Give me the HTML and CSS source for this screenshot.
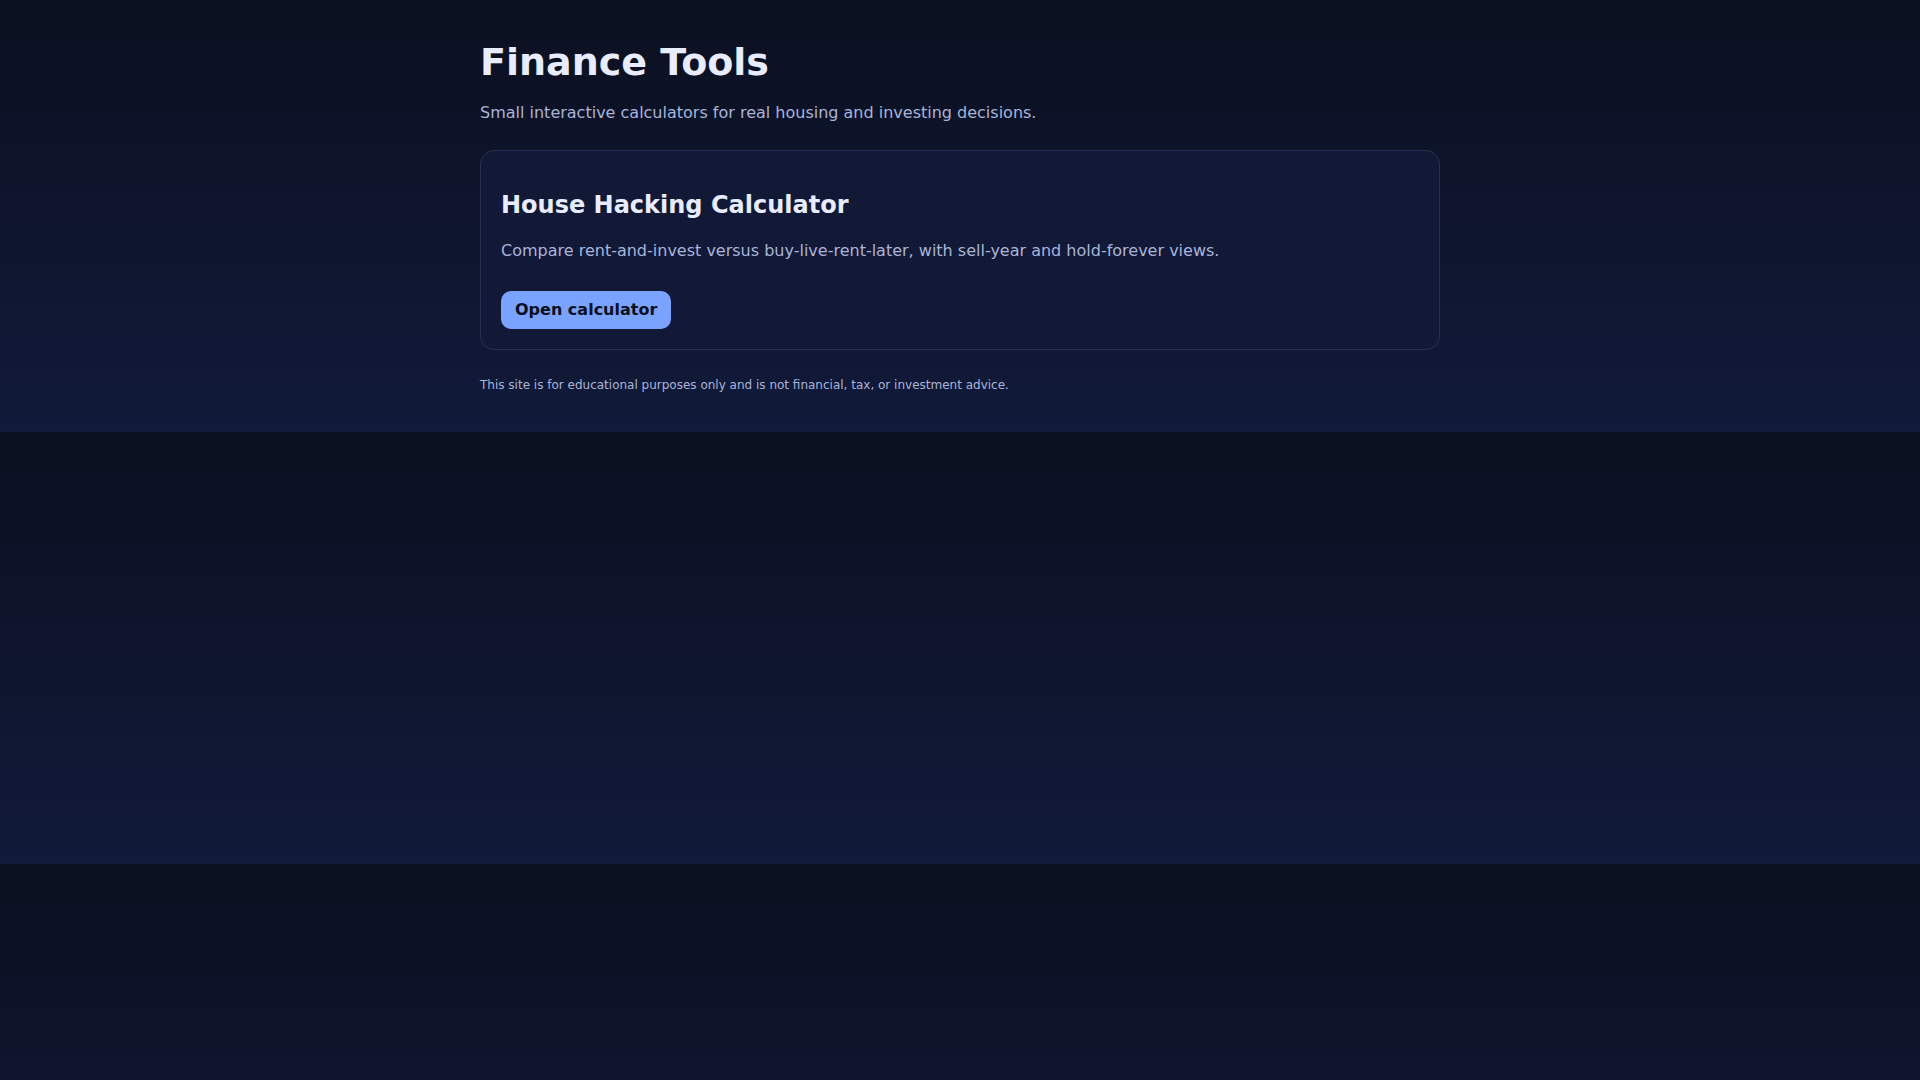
FILE: index.html
```html
<!DOCTYPE html>
<html lang="en">
<head>
<meta charset="utf-8">
<title>Finance Tools</title>
<link rel="stylesheet" href="styles.css">
</head>
<body>
<main class="page">
  <h1 class="title">Finance Tools</h1>
  <p class="subtitle">Small interactive calculators for real housing and investing decisions.</p>
  <section class="card">
    <h2 class="card-title">House Hacking Calculator</h2>
    <p class="card-desc">Compare rent-and-invest versus buy-live-rent-later, with sell-year and hold-forever views.</p>
    <a class="btn" href="#">Open calculator</a>
  </section>
  <p class="disclaimer">This site is for educational purposes only and is not financial, tax, or investment advice.</p>
</main>
</body>
</html>
```

FILE: styles.css
```css
html {
  background: linear-gradient(180deg, #0b1020 0%, #111a3a 100%);
}
body {
  margin: 0;
  font-family: "DejaVu Sans", sans-serif;
  color: #e8ecff;
}
.page {
  max-width: 960px;
  margin: 0 auto;
  padding: 40px 0 37px;
}
.title {
  margin: 0 0 17px;
  font-size: 38px;
  font-weight: 700;
  line-height: normal;
  color: #e8ecff;
}
.subtitle {
  margin: 0 0 25px;
  font-size: 16px;
  line-height: 24px;
  color: #a9b4d9;
}
.card {
  border: 1px solid #273152;
  border-radius: 14px;
  background: #111936;
  padding: 20px;
}
.card-title {
  margin: 20px 0 20px;
  font-size: 24px;
  line-height: normal;
  font-weight: 700;
  color: #e8ecff;
}
.card-desc {
  margin: 0 0 28px;
  font-size: 16px;
  line-height: 24px;
  color: #a9b4d9;
}
.btn {
  display: inline-block;
  padding: 10px 14px;
  border-radius: 10px;
  background: #7aa2ff;
  color: #0b1020;
  font-weight: 700;
  font-size: 16px;
  line-height: 18px;
  text-decoration: none;
}
.disclaimer {
  margin: 26px 0 0;
  font-size: 12px;
  line-height: 19px;
  color: #a9b4d9;
}
```
